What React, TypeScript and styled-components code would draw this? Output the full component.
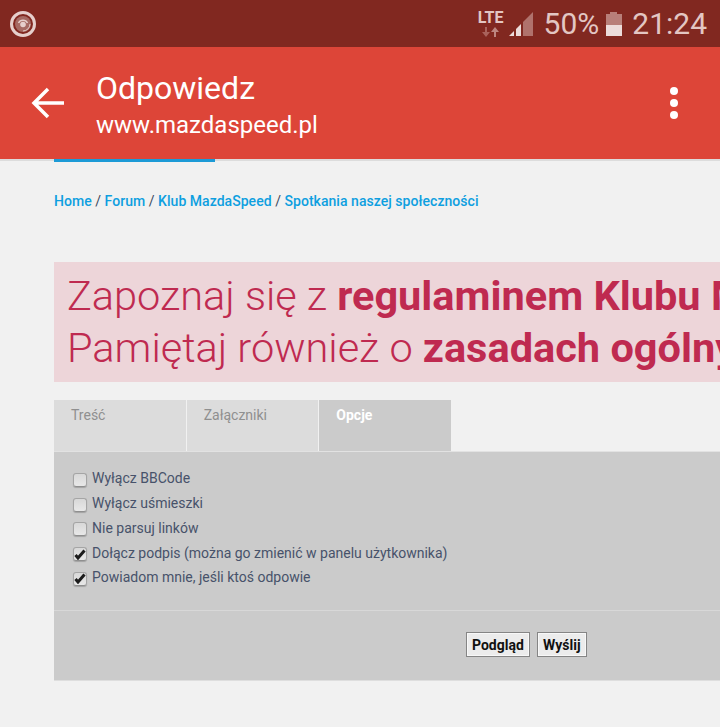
import React from "react";
import styled, { createGlobalStyle } from "styled-components";

const GlobalStyle = createGlobalStyle`
  html, body {
    margin: 0;
    padding: 0;
    height: 100%;
    background: #f1f1f1;
    font-family: Roboto, "Liberation Sans", sans-serif;
  }
`;

const Screen = styled.div`
  width: 720px;
  height: 727px;
  overflow: hidden;
  background: #f1f1f1;
`;

const StatusBar = styled.div`
  height: 47px;
  background: #812820;
  display: flex;
  align-items: center;
  justify-content: space-between;
  padding: 0 13px 0 10px;
  box-sizing: border-box;
`;

const StatusRight = styled.div`
  display: flex;
  align-items: center;
`;

const StatusText = styled.span`
  font-size: 30px;
  line-height: 47px;
  color: #e3c6c3;
`;

const PercentText = styled(StatusText)`
  margin: 0 7px 0 11px;
`;

const TimeText = styled(StatusText)`
  margin-left: 10px;
`;

const LteBlock = styled.div`
  width: 26px;
  display: flex;
  flex-direction: column;
  align-items: center;
  gap: 2px;
  margin: 0 5px 0 0;
`;

const LteText = styled.span`
  font-size: 16px;
  font-weight: 700;
  line-height: 15px;
  color: #e3c6c3;
`;

const AppBar = styled.div`
  height: 112px;
  background: #dd4538;
  display: flex;
  align-items: center;
  color: #fff;
`;

const BackButton = styled.div`
  width: 96px;
  flex: none;
  display: flex;
  padding-left: 31px;
  box-sizing: border-box;
`;

const Titles = styled.div`
  flex: 1;
  display: flex;
  flex-direction: column;
  padding-top: 4px;
`;

const Title = styled.div`
  font-size: 32px;
  line-height: 40px;
`;

const Subtitle = styled.div`
  font-size: 24px;
  line-height: 34px;
`;

const MenuDots = styled.div`
  width: 8px;
  margin-right: 42px;
  display: flex;
  flex-direction: column;
  gap: 4px;
`;

const Dot = styled.span`
  width: 8px;
  height: 8px;
  border-radius: 50%;
  background: #fff;
`;

const Content = styled.div`
  padding-left: 54px;
  box-shadow: inset 0 2px 0 #dcdcdc;
`;

const ActiveStrip = styled.div`
  width: 161px;
  height: 3px;
  background: #1c9ad6;
`;

const Breadcrumbs = styled.div`
  margin-top: 30px;
  font-size: 14px;
  line-height: 18px;
  letter-spacing: 0.04px;
  color: #3c4a5e;
  white-space: nowrap;
`;

const Crumb = styled.a`
  color: #0e9fe0;
  font-weight: 500;
  text-decoration: none;
`;

const Notice = styled.div`
  margin-top: 52px;
  height: 120px;
  padding: 8px 13px 0;
  box-sizing: border-box;
  background: #edd5d9;
  color: #bf2a50;
  font-size: 41.5px;
  line-height: 52px;
  font-weight: 300;
  white-space: nowrap;
  overflow: hidden;
  b {
    font-weight: 700;
  }
`;

const Tabs = styled.div`
  margin-top: 18px;
  display: flex;
  gap: 1px;
`;

const Tab = styled.div<{ $active?: boolean }>`
  width: 131.67px;
  height: 51px;
  box-sizing: border-box;
  padding: 7px 17px 0;
  font-size: 14px;
  line-height: 17px;
  background: ${(p) => (p.$active ? "#cbcbcb" : "#dcdcdc")};
  color: ${(p) => (p.$active ? "#ffffff" : "#8f8f8f")};
  font-weight: ${(p) => (p.$active ? 700 : 400)};
`;

const Panel = styled.div`
  height: 230px;
  background: #cbcbcb;
  border-top: 1px solid #e2e2e2;
  border-bottom: 1px solid #dedede;
  box-sizing: border-box;
`;

const OptionList = styled.div`
  height: 159px;
  padding-top: 14px;
  box-sizing: border-box;
  border-bottom: 1px solid #d8d8d8;
`;

const Option = styled.label`
  height: 24.75px;
  display: flex;
  align-items: center;
  padding-left: 19px;
  font-size: 14px;
  color: #47526a;
  white-space: nowrap;
`;

const CheckBox = styled.span`
  width: 12px;
  height: 12px;
  flex: none;
  margin: 3px 5px 0 0;
  border: 1px solid #a5a5a5;
  border-bottom-color: #8f8f8f;
  border-radius: 3px;
  background: linear-gradient(#d8d8d8, #e8e8e8);
  box-shadow: 0 1px 1px rgba(0, 0, 0, 0.2);
  display: flex;
  align-items: center;
  justify-content: center;
`;

const Actions = styled.div`
  display: flex;
  gap: 7px;
  padding: 21px 0 0 412px;
`;

const FormButton = styled.button`
  height: 25px;
  min-width: 50px;
  padding: 0 5px;
  box-sizing: border-box;
  border: 1px solid #858585;
  background: #ececec;
  box-shadow: inset 0 0 0 1px #f8f8f8;
  color: #111;
  font-family: Roboto, "Liberation Sans", sans-serif;
  font-size: 14px;
  font-weight: 700;
`;

const CameraIcon = () => (
  <svg width="26" height="26" viewBox="0 0 26 26">
    <circle cx="13" cy="13" r="11.500" fill="none" stroke="#e6cfcc" strokeWidth="3" />
    <circle cx="13" cy="13" r="8" fill="#a66a63" />
    <path d="M8.500 12a5 5 0 0 1 9 0" fill="none" stroke="#e6cfcc" strokeWidth="1.400" />
    <circle cx="13" cy="13.500" r="2.800" fill="#e6cfcc" />
    <path d="M20 13a7 7 0 0 1-7 7" fill="none" stroke="#e6cfcc" strokeWidth="1" />
  </svg>
);

const DataArrows = () => (
  <svg width="20" height="10" viewBox="0 0 20 10">
    <path d="M5 10L1 5h3V0h2v5h3z" fill="#a9625b" />
    <path d="M14 0l4 5h-3v5h-2V5h-3z" fill="#bd8680" />
  </svg>
);

const SignalIcon = () => (
  <svg width="24" height="24" viewBox="0 0 24 24">
    <path d="M14 10L24 0v24H14z" fill="#b0726c" />
    <path d="M7 17l5-5v12H7z" fill="#ecdcda" />
    <path d="M0 24l5-5v5z" fill="#ecdcda" />
  </svg>
);

const BatteryIcon = () => (
  <svg width="16" height="24" viewBox="0 0 16 24">
    <path d="M4 0h7v2h5v11H0V2h4z" fill="#b87f79" />
    <rect y="13" width="16" height="11" fill="#ecdcda" />
  </svg>
);

const BackArrow = () => (
  <svg width="34" height="32" viewBox="0 0 34 32">
    <path d="M33 16H3M17 2L3 16l14 14" fill="none" stroke="#fff" strokeWidth="3.500" />
  </svg>
);

const CheckMark = () => (
  <svg width="12" height="11" viewBox="0 0 12 11">
    <path d="M1.500 6l2.500 3L10.500 1.500" fill="none" stroke="#1c1c1c" strokeWidth="3" />
  </svg>
);

const options = [
  { label: "Wyłącz BBCode", checked: false },
  { label: "Wyłącz uśmieszki", checked: false },
  { label: "Nie parsuj linków", checked: false },
  { label: "Dołącz podpis (można go zmienić w panelu użytkownika)", checked: true },
  { label: "Powiadom mnie, jeśli ktoś odpowie", checked: true },
];

export default function App() {
  return (
    <Screen>
      <GlobalStyle />
      <StatusBar>
        <CameraIcon />
        <StatusRight>
          <LteBlock>
            <LteText>LTE</LteText>
            <DataArrows />
          </LteBlock>
          <SignalIcon />
          <PercentText>50%</PercentText>
          <BatteryIcon />
          <TimeText>21:24</TimeText>
        </StatusRight>
      </StatusBar>
      <AppBar>
        <BackButton>
          <BackArrow />
        </BackButton>
        <Titles>
          <Title>Odpowiedz</Title>
          <Subtitle>www.mazdaspeed.pl</Subtitle>
        </Titles>
        <MenuDots>
          <Dot />
          <Dot />
          <Dot />
        </MenuDots>
      </AppBar>
      <Content>
        <ActiveStrip />
        <Breadcrumbs>
          <Crumb>Home</Crumb> / <Crumb>Forum</Crumb> / <Crumb>Klub MazdaSpeed</Crumb> /{" "}
          <Crumb>Spotkania naszej społeczności</Crumb>
        </Breadcrumbs>
        <Notice>
          Zapoznaj się z <b>regulaminem Klubu MazdaSpeed</b>
          <br />
          Pamiętaj również o <b>zasadach ogólnych</b>
        </Notice>
        <Tabs>
          <Tab>Treść</Tab>
          <Tab>Załączniki</Tab>
          <Tab $active>Opcje</Tab>
        </Tabs>
        <Panel>
          <OptionList>
            {options.map((o) => (
              <Option key={o.label}>
                <CheckBox>{o.checked && <CheckMark />}</CheckBox>
                {o.label}
              </Option>
            ))}
          </OptionList>
          <Actions>
            <FormButton>Podgląd</FormButton>
            <FormButton>Wyślij</FormButton>
          </Actions>
        </Panel>
      </Content>
    </Screen>
  );
}
